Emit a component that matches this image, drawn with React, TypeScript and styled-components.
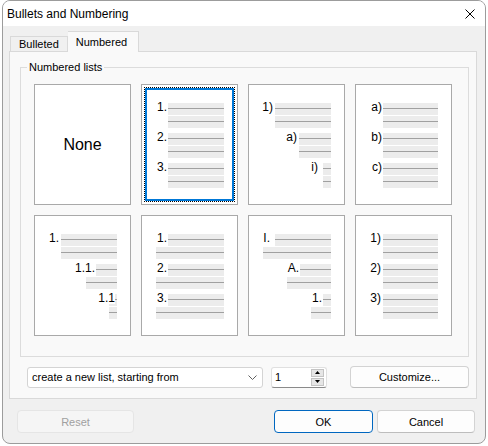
import React from 'react';
import styled, { createGlobalStyle, css } from 'styled-components';

const GlobalStyle = createGlobalStyle`
  html, body {
    margin: 0;
    padding: 0;
    background: #ffffff;
  }
  body {
    font-family: "Liberation Sans", Arial, sans-serif;
    font-size: 11px;
    color: #000000;
  }
`;

const Window = styled.div`
  box-sizing: border-box;
  width: 484px;
  height: 444px;
  margin-left: 2px;
  border: 1px solid #9c9c9c;
  border-radius: 8px;
  background: #f0f0f0;
  overflow: hidden;
  display: flex;
  flex-direction: column;
`;

const TitleBar = styled.div`
  height: 25px;
  flex: 0 0 auto;
  background: #ffffff;
  display: flex;
  align-items: center;
  justify-content: space-between;
  padding: 0 10px 0 4px;
  font-size: 12px;
`;

const CloseButton = styled.button`
  border: none;
  background: none;
  padding: 0;
  width: 10px;
  height: 10px;
  display: flex;
`;

const Body = styled.div`
  display: flex;
  flex-direction: column;
  padding: 5px 8px 0 6px;
`;

const TabStrip = styled.div`
  display: flex;
  align-items: flex-end;
  height: 20px;
  padding-left: 1px;
`;

const Tab = styled.div<{ $active?: boolean }>`
  box-sizing: border-box;
  position: relative;
  z-index: 1;
  display: flex;
  align-items: center;
  padding: 0 8px;
  border: 1px solid #d9d9d9;
  border-bottom: none;
  height: 15px;
  background: #f0f0f0;
  ${({ $active }) =>
    $active &&
    css`
      height: 21px;
      margin-bottom: -1px;
      padding: 0 11px 0 8px;
      background: #f9f9f9;
      border-left: none;
    `}
`;

const Panel = styled.div`
  box-sizing: border-box;
  height: 348px;
  border: 1px solid #d9d9d9;
  background: #f9f9f9;
  display: flex;
  flex-direction: column;
  padding: 0 7px 0 10px;
`;

const GroupBox = styled.fieldset`
  margin: 8px 0 0 0;
  padding: 10px 15px 20px 13px;
  border: 1px solid #dcdcdc;
  min-width: 0;
`;

const GroupLegend = styled.legend`
  margin-left: -7px;
  padding: 0 2px;
  line-height: 14px;
`;

const CardGrid = styled.div`
  display: grid;
  grid-template-columns: repeat(4, 97px);
  grid-auto-rows: 121px;
  gap: 10px;
`;

const Card = styled.div<{ $selected?: boolean }>`
  position: relative;
  box-sizing: border-box;
  background: #ffffff;
  border: 1px solid #a9a9a9;
  ${({ $selected }) =>
    $selected &&
    css`
      &::after {
        content: '';
        position: absolute;
        inset: 2px;
        border: 1px dotted #000000;
        box-shadow: inset 0 0 0 2px #0078d7;
      }
    `}
`;

const NoneText = styled.div`
  height: 100%;
  display: flex;
  align-items: center;
  justify-content: center;
  font-size: 16px;
`;

const Preview = styled.div`
  display: flex;
  flex-direction: column;
  gap: 5px;
  padding: 18px 13px 0 0;
`;

const Item = styled.div`
  display: flex;
  flex-direction: column;
  gap: 1px;
`;

const FirstLine = styled.div<{ $at: number }>`
  display: grid;
  grid-template-columns: ${({ $at }) => $at - 1}px 1fr;
  align-items: start;
`;

const Label = styled.span<{ $gap: number }>`
  justify-self: end;
  position: relative;
  z-index: 1;
  margin: -1px ${({ $gap }) => $gap}px 0 0;
  font-size: 12px;
  line-height: 11px;
  background: #ffffff;
  white-space: nowrap;
`;

const Band = styled.div<{ $at?: number }>`
  height: 12px;
  margin-left: ${({ $at }) => ($at ? $at - 1 : 0)}px;
  background: linear-gradient(
    to bottom,
    #ececec 5px,
    #a0a0a0 5px,
    #a0a0a0 6px,
    #ececec 6px
  );
`;

const ControlRow = styled.div`
  display: flex;
  align-items: center;
  margin-top: 9px;
  padding-left: 7px;
`;

const Combo = styled.div`
  box-sizing: border-box;
  width: 236px;
  height: 21px;
  display: flex;
  align-items: center;
  justify-content: space-between;
  padding: 0 5px 0 4px;
  background: #ffffff;
  border: 1px solid #d4d4d4;
  border-radius: 3px;
`;

const Spin = styled.div`
  box-sizing: border-box;
  width: 56px;
  height: 21px;
  margin-left: 8px;
  display: flex;
  align-items: center;
  justify-content: space-between;
  padding: 0 2px 0 3px;
  background: #ffffff;
  border: 1px solid #e0e0e0;
  border-bottom-color: #8a8a8a;
  border-radius: 3px;
`;

const SpinButtons = styled.div`
  display: flex;
  flex-direction: column;
  gap: 1px;
`;

const SpinArrow = styled.div`
  width: 13px;
  height: 8px;
  background: #e6e6e6;
  border: 1px solid #c4c4c4;
  box-sizing: border-box;
  display: flex;
  align-items: center;
  justify-content: center;
`;

const Button = styled.button<{ $width: number; $variant?: 'default' | 'disabled' }>`
  box-sizing: border-box;
  width: ${({ $width }) => $width}px;
  height: 23px;
  font-family: inherit;
  font-size: 11px;
  color: #000000;
  background: #fdfdfd;
  border: 1px solid #d3d3d3;
  border-bottom-color: #bdbdbd;
  border-radius: 4px;
  padding: 0;
  ${({ $variant }) =>
    $variant === 'default' &&
    css`
      border-color: #0067c0;
    `}
  ${({ $variant }) =>
    $variant === 'disabled' &&
    css`
      color: #a0a0a0;
      background: #f5f5f5;
      border-color: #e5e5e5;
    `}
`;

const CustomizeButton = styled(Button)`
  margin-left: auto;
  height: 22px;
`;

const Footer = styled.div`
  display: flex;
  align-items: center;
  gap: 4px;
  margin-top: 11px;
  padding: 0 2px 0 8px;
`;

const Spacer = styled.div`
  flex: 1;
`;

type Line = { label: string; at: number; wrap: number; gap?: number };

const rows: (Line[] | null)[][] = [
  [
    null,
    [
      { label: '1.', at: 27, wrap: 27 },
      { label: '2.', at: 27, wrap: 27 },
      { label: '3.', at: 27, wrap: 27 },
    ],
    [
      { label: '1)', at: 27, wrap: 27, gap: 2 },
      { label: 'a)', at: 51, wrap: 51, gap: 2 },
      { label: 'i)', at: 75, wrap: 75, gap: 5 },
    ],
    [
      { label: 'a)', at: 28, wrap: 28 },
      { label: 'b)', at: 28, wrap: 28 },
      { label: 'c)', at: 28, wrap: 28 },
    ],
  ],
  [
    [
      { label: '1.', at: 27, wrap: 27, gap: 2 },
      { label: '1.1.', at: 62, wrap: 52 },
      { label: '1.1', at: 75, wrap: 75, gap: -6 },
    ],
    [
      { label: '1.', at: 27, wrap: 15 },
      { label: '2.', at: 27, wrap: 15 },
      { label: '3.', at: 27, wrap: 15 },
    ],
    [
      { label: 'I.', at: 27, wrap: 15, gap: 5 },
      { label: 'A.', at: 52, wrap: 39 },
      { label: '1.', at: 75, wrap: 63 },
    ],
    [
      { label: '1)', at: 28, wrap: 28, gap: 2 },
      { label: '2)', at: 28, wrap: 28, gap: 2 },
      { label: '3)', at: 28, wrap: 28, gap: 2 },
    ],
  ],
];

const ListPreview = ({ lines }: { lines: Line[] }) => (
  <Preview>
    {lines.map((line, i) => (
      <Item key={i}>
        <FirstLine $at={line.at}>
          <Label $gap={line.gap ?? 1}>{line.label}</Label>
          <Band />
        </FirstLine>
        <Band $at={line.wrap} />
      </Item>
    ))}
  </Preview>
);

export default function App() {
  return (
    <>
      <GlobalStyle />
      <Window>
        <TitleBar>
          <span>Bullets and Numbering</span>
          <CloseButton aria-label="Close">
            <svg width="10" height="10" viewBox="0 0 10 10">
              <path d="M0.5 0.5 L9.5 9.5 M9.5 0.5 L0.5 9.5" stroke="#000" strokeWidth="1" fill="none" />
            </svg>
          </CloseButton>
        </TitleBar>
        <Body>
          <TabStrip>
            <Tab>Bulleted</Tab>
            <Tab $active>Numbered</Tab>
          </TabStrip>
          <Panel>
            <GroupBox>
              <GroupLegend>Numbered lists</GroupLegend>
              <CardGrid>
                {rows.flat().map((lines, i) => (
                  <Card key={i} $selected={i === 1}>
                    {lines ? <ListPreview lines={lines} /> : <NoneText>None</NoneText>}
                  </Card>
                ))}
              </CardGrid>
            </GroupBox>
            <ControlRow>
              <Combo>
                <span>create a new list, starting from</span>
                <svg width="9" height="5" viewBox="0 0 9 5">
                  <path d="M0.5 0.5 L4.5 4.5 L8.5 0.5" stroke="#606060" strokeWidth="1" fill="none" />
                </svg>
              </Combo>
              <Spin>
                <span>1</span>
                <SpinButtons>
                  <SpinArrow>
                    <svg width="5" height="3" viewBox="0 0 5 3">
                      <path d="M0 3 L2.5 0 L5 3 Z" fill="#000" />
                    </svg>
                  </SpinArrow>
                  <SpinArrow>
                    <svg width="5" height="3" viewBox="0 0 5 3">
                      <path d="M0 0 L2.5 3 L5 0 Z" fill="#000" />
                    </svg>
                  </SpinArrow>
                </SpinButtons>
              </Spin>
              <CustomizeButton $width={119}>Customize...</CustomizeButton>
            </ControlRow>
          </Panel>
          <Footer>
            <Button $width={117} $variant="disabled">
              Reset
            </Button>
            <Spacer />
            <Button $width={99} $variant="default">
              OK
            </Button>
            <Button $width={98}>Cancel</Button>
          </Footer>
        </Body>
      </Window>
    </>
  );
}
